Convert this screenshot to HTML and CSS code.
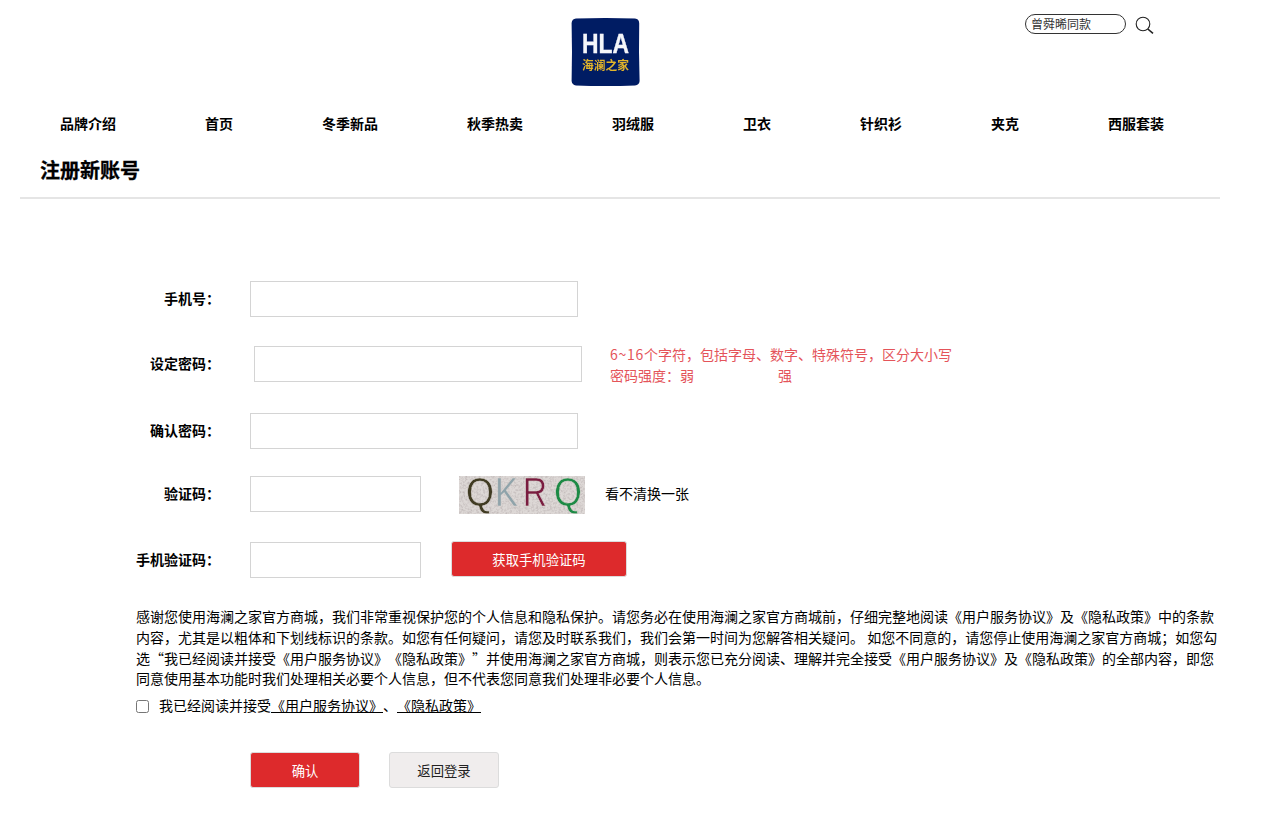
FILE: index.html
```html
<!DOCTYPE html>
<html lang="zh-CN">
<head>
<meta charset="utf-8">
<title>注册新账号</title>
<link rel="stylesheet" href="styles.css">
</head>
<body>
<header class="top">
  <svg class="logo" width="69" height="68" viewBox="0 0 69 68">
    <defs><filter id="soft"><feGaussianBlur stdDeviation="0.35"/></filter></defs>
    <g filter="url(#soft)">
      <path d="M5 .6 Q34.5 -.4 64 .6 Q68 1 68.2 5 Q67.6 34 68.6 63 Q68.4 67 64 67.4 Q34.5 68.4 5 67.4 Q1 67 .6 63 Q1.4 34 .6 5 Q1 1 5 .6Z" fill="#011a63"/>
      <text x="34.5" y="35" text-anchor="middle" class="logo-hla" textLength="47" lengthAdjust="spacingAndGlyphs">HLA</text>
      <text x="34.5" y="52" text-anchor="middle" class="logo-cn" textLength="47" lengthAdjust="spacingAndGlyphs">海澜之家</text>
    </g>
  </svg>
  <div class="search">
    <input class="search-input" type="text" placeholder="曾舜晞同款">
    <svg class="search-icon" width="20" height="20" viewBox="0 0 20 20" fill="none" stroke="#222">
      <circle cx="8" cy="10" r="6.8" stroke-width="1.1"/>
      <path d="M12.8 15 L18 19.4" stroke-width="1.6"/>
    </svg>
  </div>
</header>
<nav class="nav">
  <a>品牌介绍</a><a>首页</a><a>冬季新品</a><a>秋季热卖</a><a>羽绒服</a><a>卫衣</a><a>针织衫</a><a>夹克</a><a>西服套装</a>
</nav>
<h1 class="title">注册新账号</h1>
<main class="form">
  <div class="row row-phone">
    <label class="label">手机号：</label>
    <input class="field" type="text">
  </div>
  <div class="row row-pass">
    <label class="label">设定密码：</label>
    <input class="field field-shift" type="password">
    <div class="hint">
      <div><span class="num">6~16</span>个字符，包括字母、数字、特殊符号，区分大小写</div>
      <div class="strength"><span>密码强度：弱</span><span>强</span></div>
    </div>
  </div>
  <div class="row row-confirm">
    <label class="label">确认密码：</label>
    <input class="field" type="password">
  </div>
  <div class="row row-code">
    <label class="label">验证码：</label>
    <input class="field field-short" type="text">
    <svg class="captcha" width="126" height="38" viewBox="0 0 126 38">
      <defs>
        <filter id="grain" x="0" y="0" width="100%" height="100%">
          <feTurbulence type="fractalNoise" baseFrequency="0.45" numOctaves="3" seed="4"/>
          <feColorMatrix values="0 0 0 0 0.5  0 0 0 0 0.45  0 0 0 0 0.45  1.8 0 0 0 -0.72"/>
        </filter>
        <filter id="capblur"><feGaussianBlur stdDeviation="0.4"/></filter>
      </defs>
      <rect width="126" height="38" fill="#ddd8d6"/>
      <rect width="126" height="38" filter="url(#grain)"/>
      <g filter="url(#capblur)">
        <text x="7" y="30" class="cap cap-q1" textLength="28" lengthAdjust="spacingAndGlyphs">Q</text>
        <text x="36" y="30" class="cap cap-k" textLength="23" lengthAdjust="spacingAndGlyphs">K</text>
        <text x="64" y="30" class="cap cap-r" textLength="24" lengthAdjust="spacingAndGlyphs">R</text>
        <text x="95" y="30" class="cap cap-q2" textLength="28" lengthAdjust="spacingAndGlyphs">Q</text>
      </g>
    </svg>
    <a class="refresh">看不清换一张</a>
  </div>
  <div class="row row-sms">
    <label class="label">手机验证码：</label>
    <input class="field field-short" type="text">
    <button class="btn btn-sms" type="button">获取手机验证码</button>
  </div>
  <p class="terms">感谢您使用海澜之家官方商城，我们非常重视保护您的个人信息和隐私保护。请您务必在使用海澜之家官方商城前，仔细完整地阅读《用户服务协议》及《隐私政策》中的条款内容，尤其是以粗体和下划线标识的条款。如您有任何疑问，请您及时联系我们，我们会第一时间为您解答相关疑问。 如您不同意的，请您停止使用海澜之家官方商城；如您勾选“我已经阅读并接受《用户服务协议》《隐私政策》”并使用海澜之家官方商城，则表示您已充分阅读、理解并完全接受《用户服务协议》及《隐私政策》的全部内容，即您同意使用基本功能时我们处理相关必要个人信息，但不代表您同意我们处理非必要个人信息。</p>
  <div class="agree">
    <input class="check" type="checkbox">
    <span>我已经阅读并接受<a class="link">《用户服务协议》</a>、<a class="link">《隐私政策》</a></span>
  </div>
  <div class="actions">
    <button class="btn btn-confirm" type="button">确认</button>
    <button class="btn btn-back" type="button">返回登录</button>
  </div>
</main>
</body>
</html>
```
FILE: styles.css
```css
* { box-sizing: border-box; }
html, body { margin: 0; padding: 0; }
body {
  width: 1269px;
  height: 834px;
  overflow: hidden;
  background: #fff;
  color: #000;
  font-family: "Noto Sans CJK SC", "Liberation Sans", sans-serif;
  font-size: 14px;
  text-spacing-trim: space-all;
}
.top {
  position: relative;
  height: 103px;
  padding: 18px 59px 0 0;
  display: flex;
  justify-content: center;
  align-items: flex-start;
}
.logo { display: block; }
.logo-hla {
  font-family: "Liberation Sans", sans-serif;
  font-weight: 700;
  font-size: 28px;
  fill: #f4f6fa;
  stroke: #f4f6fa;
  stroke-width: 0.4;
}
.logo-cn {
  font-family: "Noto Sans CJK SC", sans-serif;
  font-weight: 700;
  font-size: 12px;
  fill: #e2b52a;
}
.search {
  position: absolute;
  left: 1025px;
  top: 14px;
  display: flex;
  align-items: center;
  gap: 9px;
}
.search-input {
  width: 101px;
  height: 20px;
  padding: 0 5px 2px;
  border: 1px solid #333;
  border-radius: 10px;
  font: 12px "Noto Sans CJK SC", sans-serif;
  outline: none;
  background: #fff;
}
.search-input::placeholder { color: #333; opacity: 1; }
.search-icon { display: block; overflow: visible; }
.nav {
  display: flex;
  gap: 89px;
  padding-left: 60px;
  height: 40px;
  align-items: center;
  font-size: 14px;
  font-weight: 700;
}
.nav a { white-space: nowrap; line-height: 20px; }
.title {
  margin: 0 49px 0 20px;
  padding: 12px 0 0 20px;
  height: 56px;
  border-bottom: 2px solid #e5e5e5;
  font-size: 20px;
  font-weight: 700;
  line-height: 30px;
  -webkit-text-stroke: 0.3px #000;
}
.form { padding: 0 49px 0 136px; }
.row { display: flex; align-items: center; height: 36px; }
.row-phone { margin-top: 82px; }
.row-pass { margin-top: 29px; }
.row-confirm { margin-top: 31px; }
.row-code { margin-top: 27px; }
.row-sms { margin-top: 30px; }
.label {
  width: 84px;
  margin-right: 30px;
  padding-bottom: 3px;
  text-align: right;
  font-weight: 700;
  white-space: nowrap;
}
.field {
  width: 328px;
  height: 36px;
  padding: 0 8px;
  border: 1px solid #d4d4d4;
  background: #fff;
  outline: none;
  flex: none;
}
.field-shift { margin-left: 4px; }
.field-short { width: 171px; }
.hint {
  margin-left: 28px;
  padding-top: 2px;
  color: #e4545a;
  line-height: 21px;
  white-space: nowrap;
}
.num { letter-spacing: 0.75px; }
.strength { display: flex; gap: 84px; }
.captcha { display: block; margin: 2px 0 0 38px; flex: none; overflow: visible; }
.refresh { margin-left: 20px; padding-bottom: 3px; white-space: nowrap; }
.btn {
  height: 36px;
  padding: 0;
  border: 1px solid #dcdcdc;
  border-radius: 3px;
  font: 13.33px "Noto Sans CJK SC", sans-serif;
  flex: none;
}
.btn-sms { width: 176px; margin: -2px 0 0 30px; background: #dd2a2c; color: #fff; }
.btn-confirm { width: 110px; background: #dd2a2c; color: #fff; }
.btn-back { width: 110px; background: #f0eded; color: #222; }
.cap {
  font-family: "Liberation Sans", sans-serif;
  font-size: 40px;
  stroke: #d8d2cf;
  stroke-width: 0.5;
}
.cap-q1 { fill: #3f3a22; }
.cap-k { fill: #8fa3aa; }
.cap-r { fill: #7a1f40; }
.cap-q2 { fill: #1f8a45; }
.terms {
  margin: 28px 0 0;
  line-height: 20.8px;
  width: 1084px;
}
.agree {
  display: flex;
  align-items: center;
  margin-top: 6px;
  height: 22px;
}
.check { margin: 0 10px 0 0; width: 13px; height: 13px; }
.agree span { padding-bottom: 2px; }
.link { text-decoration: underline; }
.actions {
  display: flex;
  gap: 29px;
  margin: 35px 0 0 114px;
}
```
